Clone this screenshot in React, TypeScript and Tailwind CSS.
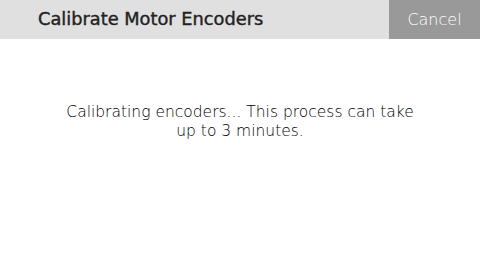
import React from 'react';

const App: React.FC = () => {
    return (
        <div className="w-[480px] h-[263px] bg-white flex flex-col">
            <div className="h-[39px] flex bg-[#e0e0e0]">
                <div className="flex-1 flex items-center pl-[38px] text-[17.8px] font-normal text-[#222] [-webkit-text-stroke:0.4px_#222] font-['DejaVu_Sans',sans-serif]">
                    Calibrate Motor Encoders
                </div>
                <button className="w-[91px] h-full bg-[#999999] text-white text-[16px] font-extralight font-['DejaVu_Sans',sans-serif]">
                    Cancel
                </button>
            </div>
            <div className="flex justify-center pt-[64px]">
                <p className="w-[360px] text-center text-[15.5px] leading-[19px] text-black font-extralight font-['DejaVu_Sans',sans-serif]">
                    Calibrating encoders... This process can take up to 3 minutes.
                </p>
            </div>
        </div>
    );
};

export default App;
